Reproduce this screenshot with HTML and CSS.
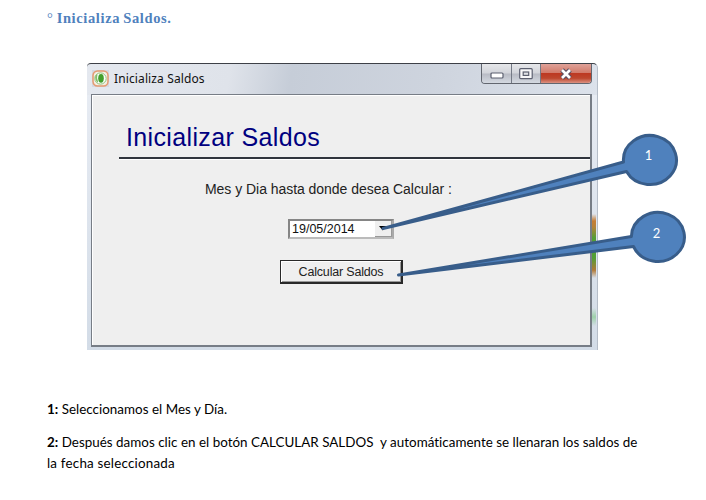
FILE: index.html
```html
<!DOCTYPE html>
<html lang="es">
<head>
<meta charset="utf-8">
<title>Inicializa Saldos</title>
<link rel="stylesheet" href="styles.css">
</head>
<body>
<main class="page">
  <h1 class="section-title"><span class="degree">°</span> Inicializa Saldos.</h1>
  <section class="window">
    <header class="titlebar">
      <svg class="app-icon" width="17" height="17" viewBox="0 0 17 17">
        <rect width="17" height="17" fill="#d5d9e3"/>
        <rect x="1" y="1" width="15" height="15" rx="4.5" fill="#f3eee2" stroke="#e49a70" stroke-width="1.5"/>
        <ellipse cx="8.5" cy="8.5" rx="5.7" ry="5.6" fill="#fff" stroke="#8fc47c" stroke-width="1"/>
        <path d="M4.2 4.5Q1.8 8.5 5.5 12.6L6.2 12Q4.2 8.5 5.5 4.5Z" fill="#83bf6b"/>
        <ellipse cx="9" cy="8.3" rx="2.8" ry="4.4" fill="#43a02c"/>
      </svg>
      <span class="caption">Inicializa Saldos</span>
      <div class="controls">
        <span class="control minimize"><svg width="14" height="7"><rect x="1" y="1" width="12" height="5" rx="1" fill="#fff" stroke="#5c6070" stroke-width="1.2"/></svg></span>
        <span class="control maximize"><svg width="14" height="12"><rect x=".7" y=".7" width="12.5" height="10" rx="1" fill="#f7f7f9" stroke="#5c6070" stroke-width="1.2"/><rect x="4.2" y="4" width="5.5" height="3.4" fill="#dfe1e6" stroke="#5c6070" stroke-width="1.2"/></svg></span>
        <span class="control close"><svg width="14" height="12"><path d="M3 2L11 10M11 2L3 10" stroke="#5b4e60" stroke-width="5"/><path d="M3 2L11 10M11 2L3 10" stroke="#fff" stroke-width="2.7"/></svg></span>
      </div>
    </header>
    <div class="client">
      <h2 class="form-title">Inicializar Saldos</h2>
      <div class="rule"></div>
      <p class="prompt">Mes y Dia hasta donde desea Calcular :</p>
      <div class="date"><span class="date-value">19/05/2014</span><span class="drop"><svg width="8" height="5"><path d="M0 0H7.5L3.8 4.5Z" fill="#000"/></svg></span></div>
      <button class="calculate" type="button">Calcular Saldos</button>
    </div>
  </section>
  <p class="note note-one"><b>1:</b> Seleccionamos el Mes y Día.</p>
  <p class="note"><b>2:</b> <span class="long-line">Después damos clic en el botón CALCULAR SALDOS &nbsp;y automáticamente se llenaran los saldos de</span><br><span class="last-line">la fecha seleccionada</span></p>
  <svg class="callouts" width="706" height="500" viewBox="0 0 706 500">
    <g fill="#4f81bd" stroke="#385d8a" stroke-width="3" stroke-linejoin="round">
      <path d="M623.5 162L383 228.5L626.5 171.5A26.5 24.5 0 1 0 623.5 162Z"/>
      <path d="M631.4 236.5L398.5 275L633.5 246.5A26.5 24.5 0 1 0 631.4 236.5Z"/>
    </g>
    <text class="number" x="648.5" y="160">1</text>
    <text class="number" x="656.5" y="238">2</text>
  </svg>
</main>
</body>
</html>
```
FILE: styles.css
```css
* { box-sizing: border-box; }
body { margin: 0; background: #fff; }
.page { position: relative; width: 706px; height: 500px; overflow: hidden; padding: 9px 47px 0; }
.section-title { margin: 0; height: 54px; font: bold 14.5px/19px "Liberation Serif", serif; letter-spacing: .62px; word-spacing: -1px; color: #4f81bd; }
.degree { font-weight: normal; }
.window {
  width: 511px; height: 287px; margin-left: 40px; padding: 0 6px 3px 4px;
  border-top: 1px solid #3d4047; border-right: 1px solid #b5bdc8; border-radius: 4px 5px 0 0;
  background:
    linear-gradient(#fff0 150px, #c57d35 157px, #b5823a 163px, #529f35 174px, #529f35 194px, #b17a37 206px, #fff0 214px, #fff0 244px, #9ed0aa 253px, #fff0 262px) right 1px top / 4px 100% no-repeat,
    linear-gradient(100deg, #e4e8ef 0, #dfe3ea 28%, #c6cdd8 40%, #ced4de 68%, #dce2eb 100%) top / 100% 31px no-repeat,
    linear-gradient(#e9edf4, #d3dce7);
}
.titlebar { display: flex; height: 30px; align-items: flex-start; }
.app-icon { margin: 6px 5px 0 1px; }
.caption { font: 12px/17px "Noto Sans", sans-serif; letter-spacing: .12px; color: #111; margin-top: 6px; }
.controls { display: flex; width: 111px; height: 20px; margin-left: auto; margin-right: -1px; border: 1px solid #62666f; border-top: 0; border-radius: 0 0 4px 4px; overflow: hidden; }
.control { display: flex; align-items: center; justify-content: center; width: 30px; background: linear-gradient(#e6e7ea, #d2d4da 48%, #b8bbc4 52%, #d4d9e1); border-right: 1px solid #747985; }
.maximize { width: 29px; }
.minimize { padding-top: 4px; }
.close { flex: 1; border: 0; background: linear-gradient(#dfa299, #d27c6c 45%, #bd3922 50%, #bd472e 75%, #dc9182); }
.client { display: flex; flex-direction: column; width: 501px; height: 253px; border: 1px solid #777d86; border-right-width: 2px; border-bottom-width: 2px; background: #efefef; box-shadow: inset 1px 1px #fff; }
.form-title { margin: 27px 0 0 34px; font: 25px/30px "Liberation Sans", sans-serif; letter-spacing: .36px; color: #000080; white-space: nowrap; }
.rule { height: 3px; margin: 5px 0 0 27px; border-top: 2px solid #30353d; border-bottom: 1px solid #fff; }
.prompt { margin: 20px 0 0 113px; font: 14px/18px "Liberation Sans", sans-serif; letter-spacing: -.04px; color: #222; white-space: nowrap; }
.date { display: flex; width: 106px; height: 20px; margin: 21px 0 0 196px; background: #fff; border: 2px solid #858585; border-right-color: #aaa; border-bottom-color: #bbb; }
.date-value { flex: 1; padding-left: 2px; font: 12.5px/17px "Liberation Sans", sans-serif; color: #111; }
.drop { display: flex; width: 17px; align-items: center; justify-content: center; background: #efefef; border-right: 1px solid #999; border-bottom: 1px solid #999; }
.calculate { width: 123px; height: 24px; margin: 21px 0 0 188px; padding: 0; border: 2px solid #292929; border-width: 1px 2px 2px 1px; border-radius: 0; background: #efefef; box-shadow: inset 1px 1px #fff, inset -1px -1px #999; font: 12.5px/18px "Liberation Sans", sans-serif; letter-spacing: -.18px; color: #222; }
.note { margin: 12px 0 0; font: 13.4px/21px Lato, sans-serif; letter-spacing: .02px; color: #000; white-space: nowrap; font-variant-ligatures: none; }
.note-one { margin-top: 49px; }
.last-line { letter-spacing: .2px; }
.callouts { position: absolute; top: 0; left: 0; pointer-events: none; }
.number { font: 13px Lato, sans-serif; fill: #fff; text-anchor: middle; }
```
